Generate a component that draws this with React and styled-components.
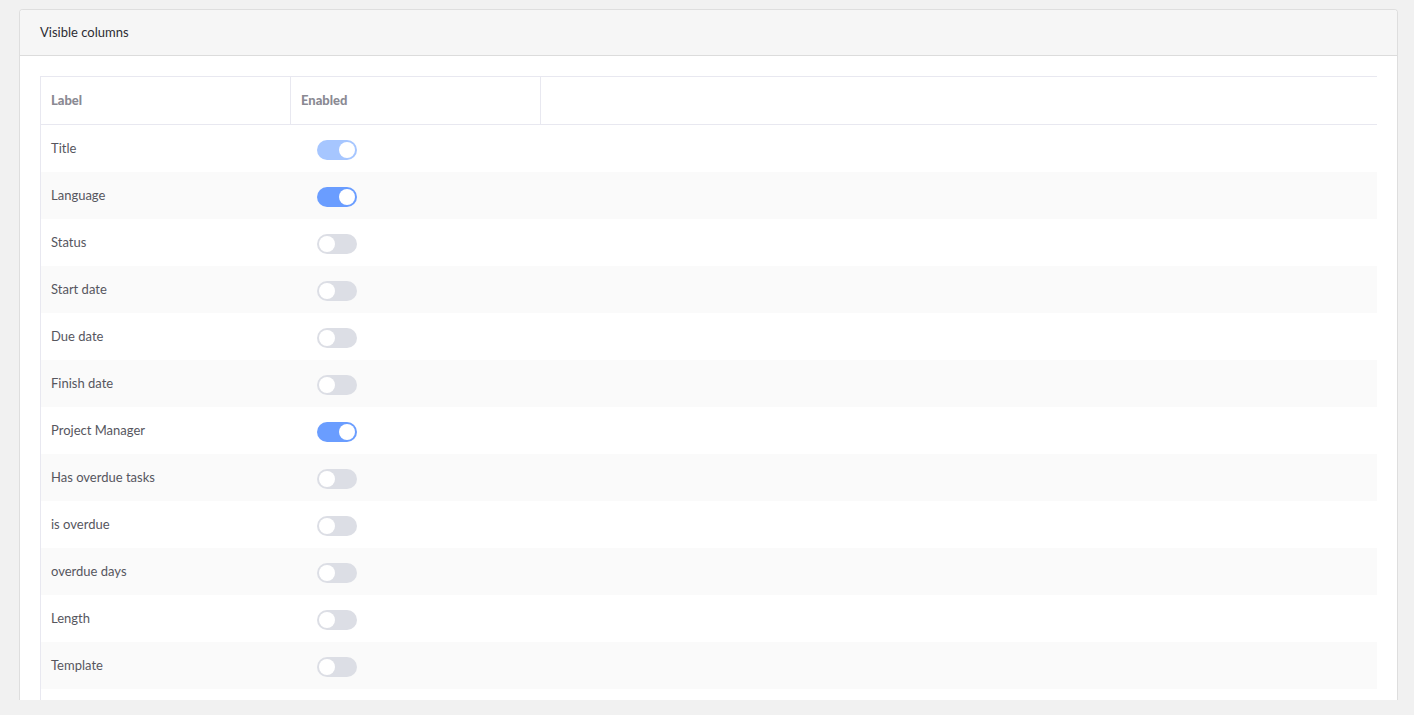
import React from 'react';
import styled, { createGlobalStyle } from 'styled-components';

const GlobalStyle = createGlobalStyle`
  html, body {
    margin: 0;
    padding: 0;
    background: #f1f1f1;
    font-family: Lato, "Open Sans", sans-serif;
  }
`;

const Page = styled.div`
  height: 715px;
  box-sizing: border-box;
  padding: 9px 16px 15px 19px;
  overflow: hidden;
`;

const Card = styled.section`
  height: 100%;
  background: #fff;
  border: 1px solid #dedede;
  border-bottom: none;
  border-radius: 4px 4px 0 0;
  overflow: hidden;
  box-sizing: border-box;
`;

const CardHeader = styled.header`
  height: 46px;
  display: flex;
  align-items: center;
  padding: 0 20px 1px;
  box-sizing: border-box;
  background: #f6f6f6;
  border-bottom: 1px solid #dcdcdc;
  font-size: 13px;
  color: #2d2d33;
`;

const CardBody = styled.div`
  padding: 20px 20px 0 20px;
`;

const Table = styled.table`
  width: 100%;
  border-collapse: collapse;
  border-left: 1px solid #e8e8f0;
  font-size: 13px;
`;

const HeadCell = styled.th`
  width: ${p => p.$width || 'auto'};
  height: 48px;
  padding: 0 10px 2px;
  text-align: left;
  font-weight: 900;
  color: #8a8a93;
  border-top: 1px solid #e8e8f0;
  border-bottom: 1px solid #e8e8f0;
  border-right: ${p => (p.$last ? 'none' : '1px solid #e8e8f0')};
  box-sizing: border-box;
`;

const Row = styled.tr`
  background: ${p => (p.$striped ? '#fafafa' : '#fff')};
`;

const Cell = styled.td`
  height: 47px;
  padding: 0 10px 1px;
  box-sizing: border-box;
  color: #56565e;
  vertical-align: middle;
`;

const Toggle = styled.span`
  display: inline-block;
  position: relative;
  margin-left: 16px;
  margin-top: 7px;
  width: 40px;
  height: 20px;
  border-radius: 10px;
  background: ${p => (p.$on ? (p.$locked ? '#a6c6ff' : '#6a9dff') : '#dcdee5')};

  &::after {
    content: '';
    position: absolute;
    top: 2px;
    left: ${p => (p.$on ? '22px' : '2px')};
    width: 16px;
    height: 16px;
    border-radius: 50%;
    background: #fff;
  }
`;

const columns = [
  { label: 'Title', on: true, locked: true },
  { label: 'Language', on: true },
  { label: 'Status' },
  { label: 'Start date' },
  { label: 'Due date' },
  { label: 'Finish date' },
  { label: 'Project Manager', on: true },
  { label: 'Has overdue tasks' },
  { label: 'is overdue' },
  { label: 'overdue days' },
  { label: 'Length' },
  { label: 'Template' },
];

export default function App() {
  return (
    <>
      <GlobalStyle />
      <Page>
        <Card>
          <CardHeader>Visible columns</CardHeader>
          <CardBody>
            <Table>
              <thead>
                <tr>
                  <HeadCell $width="250px">Label</HeadCell>
                  <HeadCell $width="250px">Enabled</HeadCell>
                  <HeadCell $last />
                </tr>
              </thead>
              <tbody>
                {columns.map((c, i) => (
                  <Row key={c.label} $striped={i % 2 === 1}>
                    <Cell>{c.label}</Cell>
                    <Cell>
                      <Toggle $on={c.on} $locked={c.locked} />
                    </Cell>
                    <Cell />
                  </Row>
                ))}
                <Row>
                  <Cell />
                  <Cell />
                  <Cell />
                </Row>
              </tbody>
            </Table>
          </CardBody>
        </Card>
      </Page>
    </>
  );
}
